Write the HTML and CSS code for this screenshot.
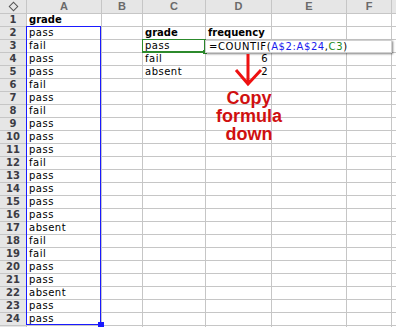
FILE: index.html
```html
<!DOCTYPE html>
<html lang="en">

<head>
  <meta charset="UTF-8">
  <title>COUNTIF frequency</title>
  <link rel="stylesheet" href="styles.css">
</head>

<body>
  <div class="sheet">
    <div class="grid">
      <div class="corner"><span class="diamond"></span></div>
      <div class="colhead">A</div><div class="colhead">B</div><div class="colhead">C</div><div class="colhead">D</div><div class="colhead">E</div><div class="colhead">F</div><div class="colhead"></div>

      <div class="rowhead">1</div><div class="cell bold">grade</div><div class="cell"></div><div class="cell"></div><div class="cell"></div><div class="cell"></div><div class="cell"></div><div class="cell"></div>
      <div class="rowhead">2</div><div class="cell">pass</div><div class="cell"></div><div class="cell bold">grade</div><div class="cell bold">frequency</div><div class="cell"></div><div class="cell"></div><div class="cell"></div>
      <div class="rowhead">3</div><div class="cell">fail</div><div class="cell"></div><div class="cell">pass</div><div class="cell"></div><div class="cell"></div><div class="cell"></div><div class="cell"></div>
      <div class="rowhead">4</div><div class="cell">pass</div><div class="cell"></div><div class="cell">fail</div><div class="cell num">6</div><div class="cell"></div><div class="cell"></div><div class="cell"></div>
      <div class="rowhead">5</div><div class="cell">pass</div><div class="cell"></div><div class="cell">absent</div><div class="cell num">2</div><div class="cell"></div><div class="cell"></div><div class="cell"></div>
      <div class="rowhead">6</div><div class="cell">fail</div><div class="cell"></div><div class="cell"></div><div class="cell"></div><div class="cell"></div><div class="cell"></div><div class="cell"></div>
      <div class="rowhead">7</div><div class="cell">pass</div><div class="cell"></div><div class="cell"></div><div class="cell"></div><div class="cell"></div><div class="cell"></div><div class="cell"></div>
      <div class="rowhead">8</div><div class="cell">fail</div><div class="cell"></div><div class="cell"></div><div class="cell"></div><div class="cell"></div><div class="cell"></div><div class="cell"></div>
      <div class="rowhead">9</div><div class="cell">pass</div><div class="cell"></div><div class="cell"></div><div class="cell"></div><div class="cell"></div><div class="cell"></div><div class="cell"></div>
      <div class="rowhead">10</div><div class="cell">pass</div><div class="cell"></div><div class="cell"></div><div class="cell"></div><div class="cell"></div><div class="cell"></div><div class="cell"></div>
      <div class="rowhead">11</div><div class="cell">pass</div><div class="cell"></div><div class="cell"></div><div class="cell"></div><div class="cell"></div><div class="cell"></div><div class="cell"></div>
      <div class="rowhead">12</div><div class="cell">fail</div><div class="cell"></div><div class="cell"></div><div class="cell"></div><div class="cell"></div><div class="cell"></div><div class="cell"></div>
      <div class="rowhead">13</div><div class="cell">pass</div><div class="cell"></div><div class="cell"></div><div class="cell"></div><div class="cell"></div><div class="cell"></div><div class="cell"></div>
      <div class="rowhead">14</div><div class="cell">pass</div><div class="cell"></div><div class="cell"></div><div class="cell"></div><div class="cell"></div><div class="cell"></div><div class="cell"></div>
      <div class="rowhead">15</div><div class="cell">pass</div><div class="cell"></div><div class="cell"></div><div class="cell"></div><div class="cell"></div><div class="cell"></div><div class="cell"></div>
      <div class="rowhead">16</div><div class="cell">pass</div><div class="cell"></div><div class="cell"></div><div class="cell"></div><div class="cell"></div><div class="cell"></div><div class="cell"></div>
      <div class="rowhead">17</div><div class="cell">absent</div><div class="cell"></div><div class="cell"></div><div class="cell"></div><div class="cell"></div><div class="cell"></div><div class="cell"></div>
      <div class="rowhead">18</div><div class="cell">fail</div><div class="cell"></div><div class="cell"></div><div class="cell"></div><div class="cell"></div><div class="cell"></div><div class="cell"></div>
      <div class="rowhead">19</div><div class="cell">fail</div><div class="cell"></div><div class="cell"></div><div class="cell"></div><div class="cell"></div><div class="cell"></div><div class="cell"></div>
      <div class="rowhead">20</div><div class="cell">pass</div><div class="cell"></div><div class="cell"></div><div class="cell"></div><div class="cell"></div><div class="cell"></div><div class="cell"></div>
      <div class="rowhead">21</div><div class="cell">pass</div><div class="cell"></div><div class="cell"></div><div class="cell"></div><div class="cell"></div><div class="cell"></div><div class="cell"></div>
      <div class="rowhead">22</div><div class="cell">absent</div><div class="cell"></div><div class="cell"></div><div class="cell"></div><div class="cell"></div><div class="cell"></div><div class="cell"></div>
      <div class="rowhead">23</div><div class="cell">pass</div><div class="cell"></div><div class="cell"></div><div class="cell"></div><div class="cell"></div><div class="cell"></div><div class="cell"></div>
      <div class="rowhead">24</div><div class="cell">pass</div><div class="cell"></div><div class="cell"></div><div class="cell"></div><div class="cell"></div><div class="cell"></div><div class="cell"></div>
      <div class="rowhead"></div><div class="cell"></div><div class="cell"></div><div class="cell"></div><div class="cell"></div><div class="cell"></div><div class="cell"></div><div class="cell"></div>
    </div>

    <!-- range referenced by the formula -->
    <div class="range-box"><span class="range-handle"></span></div>

    <!-- active cell C3 -->
    <div class="active-cell"><span class="active-handle"></span></div>

    <div class="formula-tip">=COUNTIF(<span class="ref-blue">A$2:A$24</span>,<span class="ref-green">C3</span>)</div>

    <svg class="arrow" width="30" height="34" viewBox="0 0 30 34">
      <path d="M14 0 V30 M2 16 L14 30 L27 16" fill="none" stroke="#ee1111" stroke-width="3" />
    </svg>

    <div class="note">Copy<br>formula<br>down</div>
  </div>
</body>

</html>
```

FILE: styles.css
```css
* {
  margin: 0;
  padding: 0;
  box-sizing: border-box;
}

body {
  background: #ffffff;
  overflow: hidden;
  font-family: 'DejaVu Sans', 'Verdana', sans-serif;
  font-size: 10px;
  color: #000000;
}

.sheet {
  position: relative;
  width: 396px;
  height: 327px;
  overflow: hidden;
}

.grid {
  display: grid;
  grid-template-columns: 26px 74px 40px 62px 65px 74px 44px 20px;
  grid-template-rows: 13px;
  grid-auto-rows: 12px;
  gap: 1px;
  background: #c6c6c6;
}

.corner,
.colhead,
.rowhead {
  background: #e6e6e6;
  display: flex;
  align-items: center;
  justify-content: center;
}

.colhead {
  color: #6a6a6a;
  font-family: 'Liberation Sans', Arial, sans-serif;
  font-weight: 700;
  font-size: 11px;
  line-height: 13px;
}

.rowhead {
  color: #3c3c44;
  font-weight: 700;
  line-height: 12px;
}

.diamond {
  width: 7px;
  height: 7px;
  border: 1px solid #555555;
  transform: rotate(45deg);
}

.cell {
  background: #ffffff;
  padding: 0 2px;
  line-height: 12px;
  letter-spacing: 0.5px;
  white-space: nowrap;
}

.cell.bold {
  font-weight: 700;
  letter-spacing: 0;
}

.cell.num {
  text-align: right;
  padding-right: 3px;
}

/* overlays */
.range-box {
  position: absolute;
  left: 26px;
  top: 26px;
  width: 75px;
  height: 299px;
  border: 1px solid #1a1aff;
}

.range-handle {
  position: absolute;
  right: -4px;
  bottom: -4px;
  width: 6px;
  height: 6px;
  background: #1a1aff;
}

.active-cell {
  position: absolute;
  left: 142px;
  top: 39px;
  width: 64px;
  height: 14px;
  border: 1px solid #2c8a2c;
  border-width: 1px 2px 2px 1px;
}

.active-handle {
  position: absolute;
  right: -3px;
  bottom: -3px;
  width: 4px;
  height: 4px;
  background: #2c8a2c;
}

.formula-tip {
  position: absolute;
  left: 205px;
  top: 40px;
  width: 187px;
  height: 13px;
  padding-left: 3px;
  background: #ffffff;
  border: 1px solid #d0d0d0;
  box-shadow: 1px 1px 2px rgba(0, 0, 0, 0.5);
  line-height: 11px;
  letter-spacing: 0.6px;
  white-space: nowrap;
}

.ref-blue {
  color: #1a1aee;
}

.ref-green {
  color: #1c8a1c;
}

.arrow {
  position: absolute;
  left: 234px;
  top: 54px;
}

.note {
  position: absolute;
  left: 209px;
  top: 89px;
  width: 80px;
  text-align: center;
  font-family: 'Liberation Sans', Arial, sans-serif;
  font-weight: 700;
  font-size: 18px;
  line-height: 18px;
  color: #d01010;
}
```
